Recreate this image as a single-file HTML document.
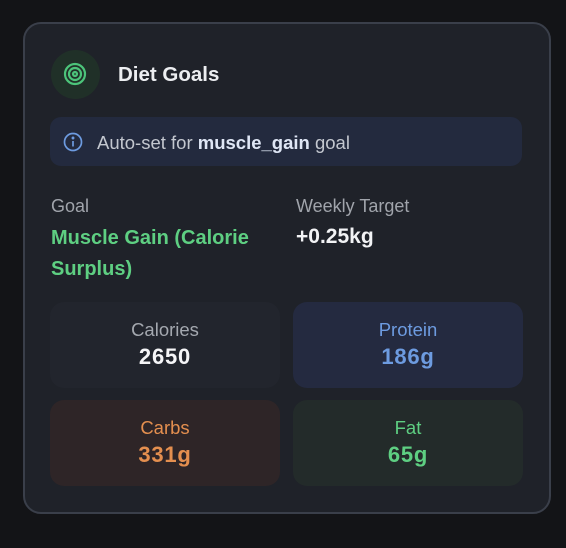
<!DOCTYPE html>
<html><head><style>
*{margin:0;padding:0;box-sizing:border-box}
body{width:566px;height:548px;background:#131417;font-family:"Liberation Sans",sans-serif;position:relative;overflow:hidden}
.card{position:absolute;left:23px;top:22px;width:528px;height:492px;background:#1f2229;border:2px solid #3a3f4a;border-radius:18px}
.a{position:absolute;white-space:nowrap}
.tile{position:absolute;width:230px;height:86px;border-radius:14px;text-align:center}
.tile .l{font-size:18.5px;margin-top:17px}
.tile .v{font-size:22px;font-weight:bold;margin-top:3px;letter-spacing:.8px}
</style></head><body>
<div class="card"></div>
<div class="a" style="left:51px;top:50px;width:49px;height:49px;border-radius:50%;background:#203028"></div>
<svg class="a" style="left:62px;top:61px" width="26" height="26" viewBox="0 0 26 26" fill="none" stroke="#4cc47a" stroke-width="2.2"><circle cx="13" cy="13" r="10"/><circle cx="13" cy="13" r="6"/><circle cx="13" cy="13" r="2"/></svg>
<div class="a" style="left:118px;top:63px;font-size:20.5px;font-weight:bold;color:#eceef1">Diet Goals</div>
<div class="a" style="left:50px;top:117px;width:472px;height:49px;border-radius:11px;background:#232a3e"></div>
<svg class="a" style="left:63px;top:132px" width="20" height="20" viewBox="0 0 20 20" fill="none" stroke="#6d9be0" stroke-width="1.7"><circle cx="10" cy="10" r="8.5"/><line x1="10" y1="9" x2="10" y2="14.5"/><circle cx="10" cy="6" r=".6" fill="#6d9be0"/></svg>
<div class="a" style="left:97px;top:132px;font-size:18.5px;color:#c3c7cf">Auto-set for <b style="color:#dfe6f5">muscle_gain</b> goal</div>
<div class="a" style="left:51px;top:196px;font-size:18px;color:#a0a4ab">Goal</div>
<div class="a" style="left:51px;top:223px;font-size:20px;font-weight:bold;color:#5ecf82;line-height:31px;width:230px;white-space:normal">Muscle Gain (Calorie Surplus)</div>
<div class="a" style="left:296px;top:196px;font-size:18px;color:#a0a4ab">Weekly Target</div>
<div class="a" style="left:296px;top:225px;font-size:21px;font-weight:bold;color:#f2f3f5">+0.25kg</div>
<div class="tile" style="left:50px;top:302px;background:#22252d"><div class="l" style="color:#a4a8af">Calories</div><div class="v" style="color:#f5f5f7">2650</div></div>
<div class="tile" style="left:293px;top:302px;background:#242a40"><div class="l" style="color:#6d9be0">Protein</div><div class="v" style="color:#6d9be0">186g</div></div>
<div class="tile" style="left:50px;top:400px;background:#2e2527"><div class="l" style="color:#e48f4f">Carbs</div><div class="v" style="color:#e48f4f">331g</div></div>
<div class="tile" style="left:293px;top:400px;background:#232b2a"><div class="l" style="color:#5ecf82">Fat</div><div class="v" style="color:#5ecf82">65g</div></div>
</body></html>
